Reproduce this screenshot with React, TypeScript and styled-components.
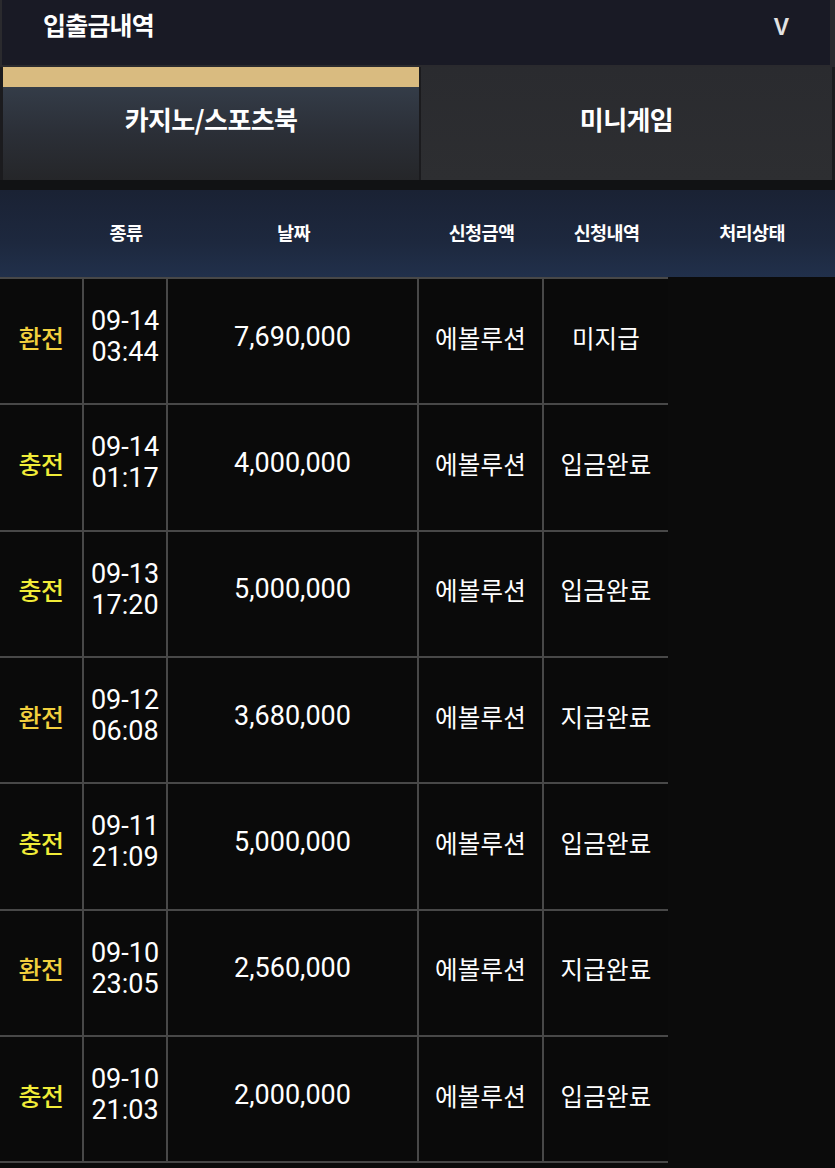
import React from 'react'
import styled, { createGlobalStyle } from 'styled-components'

const GlobalStyle = createGlobalStyle`
	html, body {
		margin: 0;
		padding: 0;
		background: #0b0b0b;
		font-family: Roboto, "Noto Sans CJK KR", sans-serif;
		color: #fff;
	}
	* {
		box-sizing: border-box;
	}
`

const Page = styled.div`
	width: 835px;
	min-height: 1168px;
	background: #0b0b0b;
`

const TopWrap = styled.div`
	background: #2a2a2e;
	padding: 0 5px 2px 2px;
`

const TitleBar = styled.div`
	height: 65px;
	background: #191a25;
	display: flex;
	align-items: center;
	justify-content: space-between;
	padding: 0 41px 18px 41px;
`

const Title = styled.div`
	font-family: "Noto Sans CJK KR", sans-serif;
	font-size: 25px;
	font-weight: 700;
	letter-spacing: -0.8px;
`

const Chevron = styled.div`
	font-family: "Liberation Sans", sans-serif;
	font-size: 23px;
	font-weight: 700;
	color: #e2e2e2;
	margin-top: 8px;
`

const TabRow = styled.div`
	display: grid;
	grid-template-columns: 416px 1fr;
	gap: 2px;
	height: 113px;
	padding: 0 3px;
	background: #1b1b1e;
`

const Tab = styled.div<{ $active?: boolean }>`
	display: flex;
	align-items: center;
	justify-content: center;
	font-family: "Noto Sans CJK KR", sans-serif;
	font-size: 26px;
	font-weight: 700;
	letter-spacing: -0.6px;
	color: #fff;
	border-top: ${(p) => (p.$active ? '20px solid #d9bb80' : 'none')};
	padding-bottom: ${(p) => (p.$active ? '30px' : '10px')};
	background: ${(p) =>
		p.$active
			? 'linear-gradient(180deg, #343c48 0%, #2b2f37 50%, #252629 100%)'
			: 'linear-gradient(180deg, #2a2b2f 0%, #2d2e31 100%)'};
`

const Divider = styled.div`
	height: 10px;
	background: #111214;
`

const HeadRow = styled.div`
	display: grid;
	grid-template-columns: 84px 84px 251px 125px 125px 1fr;
	height: 87px;
	align-items: center;
	background: linear-gradient(180deg, #1a2234 0%, #1d283e 60%, #21304b 100%);
`

const HeadCell = styled.div`
	text-align: center;
	font-family: "Noto Sans CJK KR", sans-serif;
	font-size: 18.5px;
	font-weight: 700;
	letter-spacing: -0.6px;
	padding-bottom: 4px;
`

const Grid = styled.div`
	display: grid;
	grid-template-columns: 82px 82px 249px 123px 124px;
	grid-auto-rows: 124.33px;
	gap: 2px;
	width: 668px;
	padding: 2px 0;
	background: #484848;
`

const Cell = styled.div`
	background: #0a0a0a;
	display: flex;
	flex-direction: column;
	align-items: center;
	justify-content: center;
	padding-bottom: 8px;
	font-size: 27px;
	line-height: 31px;
	color: #fff;
`

const KindCell = styled(Cell)<{ $kind: string }>`
	font-family: "Noto Sans CJK KR", sans-serif;
	font-size: 25px;
	font-weight: 500;
	letter-spacing: -0.5px;
	color: ${(p) => (p.$kind === '환전' ? '#f2d03e' : '#f1ec38')};
`

const TextCell = styled(Cell)`
	font-family: "Noto Sans CJK KR", sans-serif;
	font-size: 24.5px;
	letter-spacing: 0.2px;
`

type Row = {
	kind: string
	date: string
	time: string
	amount: string
	game: string
	status: string
}

const rows: Row[] = [
	{ kind: '환전', date: '09-14', time: '03:44', amount: '7,690,000', game: '에볼루션', status: '미지급' },
	{ kind: '충전', date: '09-14', time: '01:17', amount: '4,000,000', game: '에볼루션', status: '입금완료' },
	{ kind: '충전', date: '09-13', time: '17:20', amount: '5,000,000', game: '에볼루션', status: '입금완료' },
	{ kind: '환전', date: '09-12', time: '06:08', amount: '3,680,000', game: '에볼루션', status: '지급완료' },
	{ kind: '충전', date: '09-11', time: '21:09', amount: '5,000,000', game: '에볼루션', status: '입금완료' },
	{ kind: '환전', date: '09-10', time: '23:05', amount: '2,560,000', game: '에볼루션', status: '지급완료' },
	{ kind: '충전', date: '09-10', time: '21:03', amount: '2,000,000', game: '에볼루션', status: '입금완료' },
]

const App: React.FC = () => {
	return (
		<Page>
			<GlobalStyle />
			<TopWrap>
				<TitleBar>
					<Title>입출금내역</Title>
					<Chevron>V</Chevron>
				</TitleBar>
			</TopWrap>
			<TabRow>
				<Tab $active>카지노/스포츠북</Tab>
				<Tab>미니게임</Tab>
			</TabRow>
			<Divider />
			<HeadRow>
				<div />
				<HeadCell>종류</HeadCell>
				<HeadCell>날짜</HeadCell>
				<HeadCell>신청금액</HeadCell>
				<HeadCell>신청내역</HeadCell>
				<HeadCell>처리상태</HeadCell>
			</HeadRow>
			<Grid>
				{rows.map((r, i) => (
					<React.Fragment key={i}>
						<KindCell $kind={r.kind}>{r.kind}</KindCell>
						<Cell>
							<span>{r.date}</span>
							<span>{r.time}</span>
						</Cell>
						<Cell>{r.amount}</Cell>
						<TextCell>{r.game}</TextCell>
						<TextCell>{r.status}</TextCell>
					</React.Fragment>
				))}
			</Grid>
		</Page>
	)
}

export default App
